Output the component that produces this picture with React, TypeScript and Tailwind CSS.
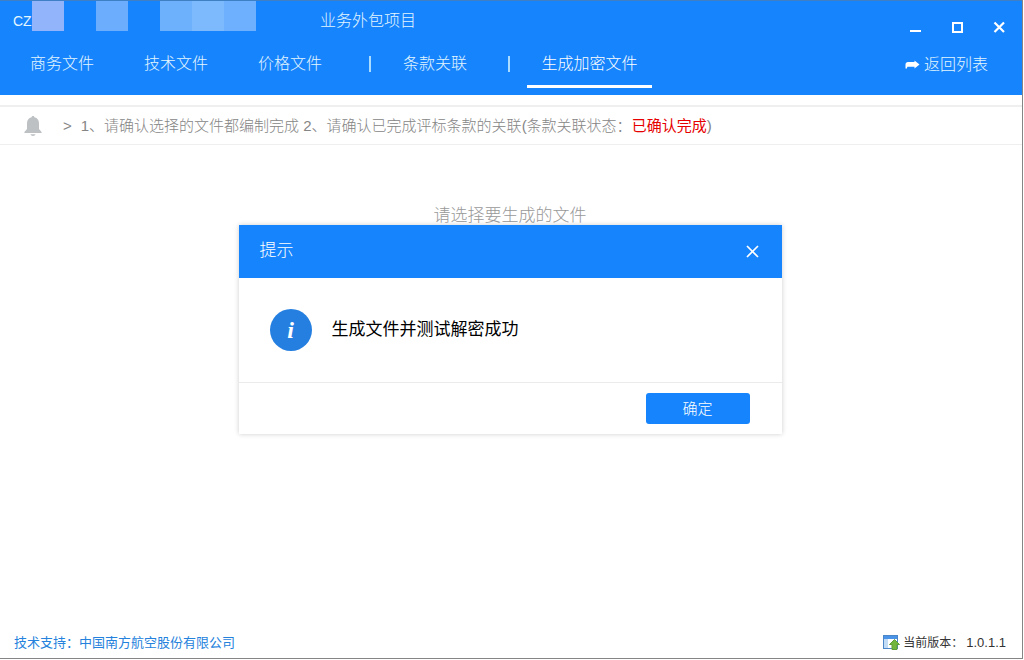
import React from "react";

const tabs = ["商务文件", "技术文件", "价格文件"];

const Divider = () => <span className="h-4 w-[2px] bg-[#a9dcff]" />;

const WindowControls = () => (
  <div className="flex text-white">
    <button aria-label="最小化" className="flex w-[42px] h-6 items-center justify-center">
      <svg width="12" height="12" viewBox="0 0 12 12">
        <rect x="1" y="9" width="11" height="2" fill="currentColor" />
      </svg>
    </button>
    <button aria-label="最大化" className="flex w-[42px] h-6 items-center justify-center">
      <svg width="12" height="12" viewBox="0 0 12 12">
        <rect x="2" y="2" width="9" height="9" fill="none" stroke="currentColor" strokeWidth="2" />
      </svg>
    </button>
    <button aria-label="关闭" className="flex w-[42px] h-6 items-center justify-center">
      <svg width="12" height="12" viewBox="0 0 12 12">
        <path d="M1.5 1.5L11 11M11 1.5L1.5 11" stroke="currentColor" strokeWidth="2.2" />
      </svg>
    </button>
  </div>
);

const Header = () => (
  <header className="flex h-[95px] justify-between border-t border-[#3f7fc4] bg-[#1684fc] text-base text-[#e4f6ff]">
    <div>
      <div className="flex h-[38px] items-start">
        <span className="w-8 shrink-0 pl-[13px] text-sm leading-10">CZ</span>
        <span className="h-[30px] w-8 bg-[#91b4fb]" />
        <span className="ml-8 h-[30px] w-8 bg-[#6caefd]" />
        <span className="ml-8 h-[30px] w-8 bg-[#6db1fd]" />
        <span className="h-[30px] w-8 bg-[#7cb9fd]" />
        <span className="h-[30px] w-8 bg-[#6eb0fd]" />
        <h1 className="ml-16 leading-10">业务外包项目</h1>
      </div>
      <nav className="flex h-12 items-center pt-[2px] pl-[14px]">
        {tabs.map((tab) => (
          <button key={tab} className="mr-[18px] w-24">
            {tab}
          </button>
        ))}
        <span className="ml-[13px] mr-4 flex">
          <Divider />
        </span>
        <button className="w-24">条款关联</button>
        <span className="ml-[25px] mr-[17px] flex">
          <Divider />
        </span>
        <button className="h-12 w-[125px] border-y-[3px] border-t-transparent border-b-white text-white">
          生成加密文件
        </button>
      </nav>
    </div>

    <div className="flex flex-col items-end pt-[14px] pr-[2px]">
      <WindowControls />
      <a href="#" className="mt-[14px] mr-8 flex items-center gap-1">
        <svg width="15" height="10" viewBox="0 0 15 10" fill="#fff">
          <path d="M0.5 8.5V4.5C0.5 3 1.5 2 3 2H9.5V0.5L14.5 4.5L9.5 8.5V6.8H3.5C2.2 6.8 2 7.2 2 8.5Z" />
        </svg>
        返回列表
      </a>
    </div>
  </header>
);

const Notice = () => (
  <div className="mt-[10px] flex h-10 items-center border-y border-t-2 border-[#efefef] pl-[23px] text-[15px] text-[#858585]">
    <svg width="20" height="22" viewBox="0 0 20 22" fill="#bdc1c3">
      <path d="M8.6 2.2C8.6 0.6 11.4 0.6 11.4 2.2C14.6 3 16 5.3 16 8.4V14L18.6 17V18H1.4V17L4 14V8.4C4 5.3 5.4 3 8.6 2.2Z" />
      <path d="M7.5 19.3H12.5C12.2 21.6 7.8 21.6 7.5 19.3Z" />
    </svg>
    <div className="flex pt-[2px] pl-5">
      <span>&gt;</span>
      <p className="ml-[9px]">1、请确认选择的文件都编制完成 2、请确认已完成评标条款的关联</p>
      <p>
        (条款关联状态：<span className="font-normal text-[#e60000]">已确认完成</span>)
      </p>
    </div>
  </div>
);

const Dialog = () => (
  <div className="absolute inset-0 flex items-center justify-center pr-[2px]">
    <div role="dialog" aria-labelledby="dialog-title" className="w-[543px] bg-white shadow-[0_0_5px_rgba(0,0,0,0.2)]">
      <div className="flex h-[53px] items-center justify-between bg-[#1684fc] pl-[21px] pr-[23px] text-white">
        <h2 id="dialog-title" className="text-[17px]">
          提示
        </h2>
        <button aria-label="关闭">
          <svg width="13" height="13" viewBox="0 0 13 13">
            <path d="M1 1L12 12M12 1L1 12" stroke="currentColor" strokeWidth="1.7" />
          </svg>
        </button>
      </div>
      <div className="flex h-26 items-center gap-5 pl-[31px]">
        <span className="flex size-[42px] items-center justify-center rounded-full bg-[#257fe0] font-['Liberation_Serif',serif] text-2xl font-bold text-white italic">
          i
        </span>
        <p className="text-[17px] font-normal text-black">生成文件并测试解密成功</p>
      </div>
      <div className="flex h-[52px] items-center justify-end border-t border-[#ebebeb] pr-8">
        <button className="h-[31px] w-[104px] rounded-[3px] bg-[#1684fc] pt-[2px] text-[15px] text-white">确定</button>
      </div>
    </div>
  </div>
);

const Footer = () => (
  <footer className="flex h-[31px] items-center justify-between pl-[14px] pr-4 text-[13px] font-normal">
    <a href="#" className="text-[#2482dc]">
      技术支持：中国南方航空股份有限公司
    </a>
    <div className="flex items-center gap-[3px] text-[#333]">
      <svg width="17" height="17" viewBox="0 0 17 17">
        <rect x="0.5" y="1.5" width="14" height="13" fill="#fff" stroke="#4a86c8" />
        <rect x="1" y="2" width="13" height="3" fill="#4b93e6" />
        <rect x="1" y="5" width="4" height="9" fill="#c3dcf5" />
        <path d="M11.5 5.5L16.5 10.5H14V15.5H9V10.5H6.5Z" fill="#72b73c" stroke="#5d9e35" />
      </svg>
      <span className="text-xs">当前版本：</span>
      <span>1.0.1.1</span>
    </div>
  </footer>
);

const App = () => {
  return (
    <div className="min-h-screen bg-white pr-px pb-px">
      <div className="relative flex min-h-[calc(100vh-1px)] flex-col border-r border-b border-[#858585] bg-white font-['Liberation_Sans','Noto_Sans_CJK_SC',sans-serif] font-light">
        <Header />
        <Notice />
        <main className="flex-1 pt-[58px] pr-[2px] text-center text-[17px] text-[#989898]">请选择要生成的文件</main>
        <Footer />
        <Dialog />
      </div>
    </div>
  );
};

export default App;
